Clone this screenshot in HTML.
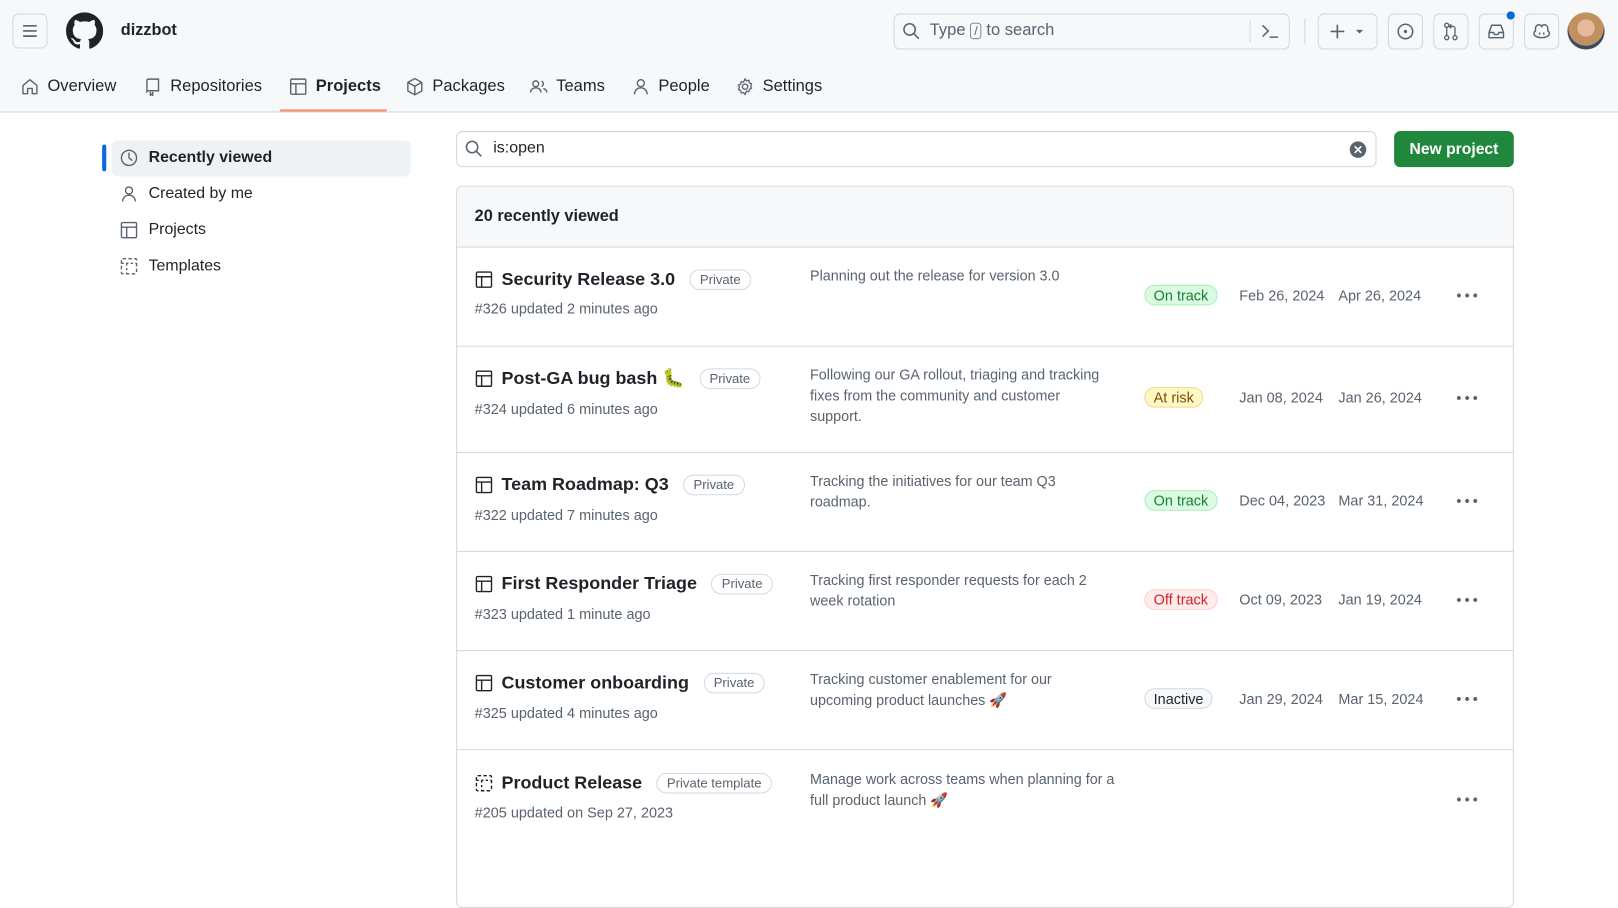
<!DOCTYPE html>
<html><head><meta charset="utf-8"><style>
*{box-sizing:border-box;margin:0;padding:0}
body{width:1618px;height:831px;overflow:hidden;background:#fff;font-family:"Liberation Sans","Noto Sans CJK JP",sans-serif;color:#1f2328;position:relative}
#w{position:absolute;left:0;top:0;width:1568px;height:806px;transform:scale(1.0319);transform-origin:0 0}
.a{position:absolute}
svg{display:block}
.hdr{left:0;top:0;width:1618px;height:109px;background:#f6f8fa;border-bottom:1px solid #d1d9e0}
.btn{border:1px solid #d1d9e0;border-radius:6px;background:#f6f8fa}
.nav{top:72px;height:24px;font-size:16px;color:#1f2328;display:flex;align-items:center;gap:8px}
.side{font-size:15.4px;display:flex;align-items:center;gap:10px}
.row{left:442px;width:1025px;border-top:1px solid #d1d9e0}
.t{font-size:17.4px;font-weight:600;display:flex;align-items:center;gap:8px;white-space:nowrap}
.lab{font-size:12.7px;font-weight:400;color:#59636e;border:1px solid #d1d9e0;border-radius:12px;padding:2px 9px;margin-left:6px}
.sub{font-size:14px;color:#59636e}
.d{font-size:13.9px;color:#59636e;line-height:20px;width:300px}
.st{font-size:14px;border-radius:12px;padding:1px 8px;border:1px solid}
.dt{font-size:14px;color:#59636e}
.dots{font-size:9px;color:#59636e;letter-spacing:2.5px}
</style></head><body><div id="w">
<div class="a hdr"></div>
<div class="a btn" style="left:12px;top:13px;width:34px;height:34px"><svg width="32" height="32" viewBox="0 0 32 32"><path d="M10 11h12M10 16h12M10 21h12" stroke="#59636e" stroke-width="1.6" stroke-linecap="round"/></svg></div>
<svg class="a" style="left:64px;top:12px" width="36" height="36" viewBox="0 0 16 16"><path fill="#1f2328" d="M8 0C3.58 0 0 3.58 0 8c0 3.54 2.290 6.53 5.47 7.59.4.07.55-.17.55-.38 0-.19-.01-.82-.01-1.490-2.01.37-2.53-.49-2.69-.94-.09-.23-.48-.94-.82-1.13-.28-.15-.68-.52-.01-.53.63-.01 1.08.58 1.23.82.72 1.21 1.87.87 2.33.66.07-.52.28-.87.51-1.07-1.78-.2-3.64-.89-3.64-3.95 0-.87.31-1.59.82-2.15-.08-.2-.36-1.02.08-2.12 0 0 .67-.21 2.2.82.64-.18 1.32-.27 2-.27.68 0 1.36.09 2 .27 1.530-1.04 2.2-.82 2.2-.82.44 1.1.16 1.92.08 2.12.51.56.82 1.27.82 2.150 0 3.07-1.87 3.75-3.65 3.95.29.25.54.73.54 1.48 0 1.07-.01 1.93-.01 2.2 0 .21.15.46.55.38A8.013 8.013 0 0016 8c0-4.42-3.58-8-8-8z"/></svg>
<div class="a" style="left:117px;top:21px;font-size:15.8px;font-weight:600">dizzbot</div>
<div class="a btn" style="left:866px;top:13px;width:384px;height:35px"></div>
<svg class="a" style="left:874px;top:21px" width="18" height="18" viewBox="0 0 18 18"><circle cx="7.5" cy="7.5" r="5.5" fill="none" stroke="#59636e" stroke-width="1.5"/><path d="M11.5 11.5l4.5 4.5" stroke="#59636e" stroke-width="1.5" stroke-linecap="round"/></svg>
<div class="a" style="left:901px;top:21px;font-size:16px;color:#59636e">Type <span style="border:1px solid #818b98;border-radius:3px;padding:0 3px;font-size:12px">/</span> to search</div>
<div class="a" style="left:1211px;top:20px;width:1px;height:21px;background:#d1d9e0"></div>
<svg class="a" style="left:1222px;top:22px" width="18" height="16" viewBox="0 0 18 16"><path d="M2 3l5 5-5 5M9 14h7" fill="none" stroke="#59636e" stroke-width="1.5" stroke-linecap="round" stroke-linejoin="round"/></svg>
<div class="a" style="left:1264px;top:18px;width:1px;height:25px;background:#d1d9e0"></div>
<div class="a btn" style="left:1277px;top:13px;width:58px;height:35px"><svg width="58" height="33" viewBox="0 0 58 33"><path d="M18 10.5v12M12 16.5h12" stroke="#59636e" stroke-width="1.6" stroke-linecap="round"/><path d="M36 15h7l-3.5 3.5z" fill="#59636e"/></svg></div>
<div class="a btn" style="left:1345px;top:13px;width:34px;height:35px"><svg width="32" height="33" viewBox="0 0 32 33"><circle cx="16" cy="16.5" r="7" fill="none" stroke="#59636e" stroke-width="1.5"/><circle cx="16" cy="16.5" r="1.6" fill="#59636e"/></svg></div>
<div class="a btn" style="left:1389px;top:13px;width:34px;height:35px"><svg width="32" height="33" viewBox="0 0 32 33"><circle cx="12" cy="10.5" r="2" fill="none" stroke="#59636e" stroke-width="1.3"/><circle cx="12" cy="22.5" r="2" fill="none" stroke="#59636e" stroke-width="1.3"/><circle cx="20" cy="22.5" r="2" fill="none" stroke="#59636e" stroke-width="1.3"/><path d="M12 12.5v8M20 20.5v-7a2 2 0 0 0-2-2h-3M16.5 9.5l-2 2 2 2" fill="none" stroke="#59636e" stroke-width="1.3"/></svg></div>
<div class="a btn" style="left:1433px;top:13px;width:34px;height:35px"><svg width="32" height="33" viewBox="0 0 32 33"><path d="M9 17.5l2.5-7h9l2.5 7v5H9zM9 17.5h4.5l1 2h3l1-2H23" fill="none" stroke="#59636e" stroke-width="1.4" stroke-linejoin="round"/></svg></div>
<div class="a" style="left:1459px;top:10px;width:10px;height:10px;border-radius:50%;background:#0969da;border:1.5px solid #f6f8fa"></div>
<div class="a btn" style="left:1477px;top:13px;width:34px;height:35px"><svg width="32" height="33" viewBox="0 0 32 33"><path d="M10 14c0-3 2-4 3.5-4s2.5 1 2.5 2.5c0-1.5 1-2.5 2.5-2.5S22 11 22 14v2c1 .5 1.5 1.5 1.5 2.5 0 2.5-3.5 4-7.5 4s-7.5-1.5-7.5-4c0-1 .5-2 1.5-2.5z" fill="none" stroke="#59636e" stroke-width="1.4"/><path d="M14 17.5v2M18 17.5v2" stroke="#59636e" stroke-width="1.4"/></svg></div>
<div class="a" style="left:1519px;top:12px;width:36px;height:36px;border-radius:50%;background:radial-gradient(circle at 50% 42%,#e8b89a 0 30%,#c09060 31% 62%,#3b4a5e 63%)"></div>

<div class="a nav" style="left:20px"><svg width="18" height="18" viewBox="0 0 16 16"><path d="M2 7l6-5 6 5v7H10V9.5H6V14H2z" fill="none" stroke="#59636e" stroke-width="1.2" stroke-linejoin="round"/></svg>Overview</div>
<div class="a nav" style="left:139px"><svg width="18" height="18" viewBox="0 0 16 16"><path d="M3 13V2.5A1 1 0 0 1 4 1.5h9v10H4a1 1 0 0 0-1 1.5M6 12.5v3l1-1 1 1v-3" fill="none" stroke="#59636e" stroke-width="1.2"/></svg>Repositories</div>
<div class="a nav" style="left:280px;font-weight:600"><svg width="18" height="18" viewBox="0 0 16 16"><rect x="1.5" y="1.5" width="13" height="13" rx="1" fill="none" stroke="#59636e" stroke-width="1.2"/><path d="M1.5 5.5h13M6 5.5v9" stroke="#59636e" stroke-width="1.2"/></svg>Projects</div>
<div class="a" style="left:271px;top:106px;width:104px;height:2px;background:#fd8c73;border-radius:2px"></div>
<div class="a nav" style="left:393px"><svg width="18" height="18" viewBox="0 0 16 16"><path d="M8 1l6 3.3v7.4L8 15l-6-3.3V4.3zM2 4.3L8 7.6l6-3.3M8 7.6V15" fill="none" stroke="#59636e" stroke-width="1.2" stroke-linejoin="round"/></svg>Packages</div>
<div class="a nav" style="left:513px"><svg width="18" height="18" viewBox="0 0 16 16"><circle cx="5.5" cy="5.5" r="2.5" fill="none" stroke="#59636e" stroke-width="1.2"/><path d="M1 13c0-2.5 2-4 4.5-4s4.5 1.5 4.5 4M10.5 3.2a2.5 2.5 0 0 1 0 4.6M12 9.5c1.8.6 3 1.8 3 3.5" fill="none" stroke="#59636e" stroke-width="1.2"/></svg>Teams</div>
<div class="a nav" style="left:612px"><svg width="18" height="18" viewBox="0 0 16 16"><circle cx="8" cy="5" r="3" fill="none" stroke="#59636e" stroke-width="1.2"/><path d="M2.5 14.5c0-3 2.5-5.5 5.5-5.5s5.5 2.5 5.5 5.5" fill="none" stroke="#59636e" stroke-width="1.2"/></svg>People</div>
<div class="a nav" style="left:713px"><svg width="18" height="18" viewBox="0 0 16 16"><circle cx="8" cy="8" r="2.3" fill="none" stroke="#59636e" stroke-width="1.2"/><path d="M8 1.2l1.2 1.8 2.1-.5.4 2.1 2 .9-.9 2 .9 1.9-2 .9-.4 2.1-2.1-.5L8 14.8l-1.2-1.8-2.1.5-.4-2.1-2-.9.9-2-.9-1.9 2-.9.4-2.1 2.1.5z" fill="none" stroke="#59636e" stroke-width="1.1" stroke-linejoin="round"/></svg>Settings</div>

<div class="a" style="left:99px;top:140px;width:4px;height:26px;border-radius:2px;background:#0969da"></div>
<div class="a" style="left:108px;top:136px;width:290px;height:35px;border-radius:6px;background:#eff2f5"></div>
<div class="a side" style="left:116px;top:144px;font-weight:600"><svg width="18" height="18" viewBox="0 0 16 16"><circle cx="8" cy="8" r="6.5" fill="none" stroke="#59636e" stroke-width="1.2"/><path d="M8 4v4l2.5 2" fill="none" stroke="#59636e" stroke-width="1.2" stroke-linecap="round"/></svg>Recently viewed</div>
<div class="a side" style="left:116px;top:179px"><svg width="18" height="18" viewBox="0 0 16 16"><circle cx="8" cy="5" r="3" fill="none" stroke="#59636e" stroke-width="1.2"/><path d="M2.5 14.5c0-3 2.5-5.5 5.5-5.5s5.5 2.5 5.5 5.5" fill="none" stroke="#59636e" stroke-width="1.2"/></svg>Created by me</div>
<div class="a side" style="left:116px;top:214px"><svg width="18" height="18" viewBox="0 0 16 16"><rect x="1.5" y="1.5" width="13" height="13" rx="1" fill="none" stroke="#59636e" stroke-width="1.2"/><path d="M1.5 5.5h13M6 5.5v9" stroke="#59636e" stroke-width="1.2"/></svg>Projects</div>
<div class="a side" style="left:116px;top:249px"><svg width="18" height="18" viewBox="0 0 16 16"><rect x="1.5" y="1.5" width="13" height="13" rx="1" fill="none" stroke="#59636e" stroke-width="1.2" stroke-dasharray="3 2"/><path d="M1.5 5.5h13M6 5.5v9" stroke="#59636e" stroke-width="1.2" stroke-dasharray="2 2"/></svg>Templates</div>

<div class="a" style="left:442px;top:127px;width:892px;height:35px;border:1px solid #d1d9e0;border-radius:6px"></div>
<svg class="a" style="left:450px;top:135px" width="18" height="18" viewBox="0 0 18 18"><circle cx="7.5" cy="7.5" r="5.5" fill="none" stroke="#59636e" stroke-width="1.5"/><path d="M11.5 11.5l4.5 4.5" stroke="#59636e" stroke-width="1.5" stroke-linecap="round"/></svg>
<div class="a" style="left:478px;top:135px;font-size:15.5px">is:open</div>
<svg class="a" style="left:1307px;top:136px" width="18" height="18" viewBox="0 0 18 18"><circle cx="9" cy="9" r="8" fill="#59636e"/><path d="M6.3 6.3l5.4 5.4M11.7 6.3l-5.4 5.4" stroke="#fff" stroke-width="1.6" stroke-linecap="round"/></svg>
<div class="a" style="left:1351px;top:127px;width:116px;height:35px;background:#1f883d;border-radius:6px;color:#fff;font-size:15.2px;font-weight:600;text-align:center;line-height:35px">New project</div>

<div class="a" style="left:442px;top:180px;width:1025px;height:700px;border:1px solid #d1d9e0;border-radius:6px"></div>
<div class="a" style="left:443px;top:181px;width:1023px;height:58px;background:#f6f8fa;border-radius:6px 6px 0 0"></div>
<div class="a" style="left:460px;top:201px;font-size:15.8px;font-weight:600">20 recently viewed</div>

<div class="a row" style="top:239px;height:96px"></div>
<div class="a t" style="left:460px;top:260px"><svg width="18" height="18" viewBox="0 0 16 16"><rect x="1.5" y="1.5" width="13" height="13" rx="1" fill="none" stroke="#1f2328" stroke-width="1.2"/><path d="M1.5 5.5h13M6 5.5v9" stroke="#1f2328" stroke-width="1.2"/></svg>Security Release 3.0<span class="lab">Private</span></div>
<div class="a sub" style="left:460px;top:291px">#326 updated 2 minutes ago</div>
<div class="a d" style="left:785px;top:257px">Planning out the release for version 3.0</div>
<div class="a st" style="left:1109px;top:276px;background:#dafbe1;border-color:#aceebb;color:#1a7f37">On track</div>
<div class="a dt" style="left:1201px;top:278px">Feb 26, 2024</div>
<div class="a dt" style="left:1297px;top:278px">Apr 26, 2024</div>
<div class="a dots" style="left:1411px;top:281px">●●●</div>

<div class="a row" style="top:335px;height:103px"></div>
<div class="a t" style="left:460px;top:356px"><svg width="18" height="18" viewBox="0 0 16 16"><rect x="1.5" y="1.5" width="13" height="13" rx="1" fill="none" stroke="#1f2328" stroke-width="1.2"/><path d="M1.5 5.5h13M6 5.5v9" stroke="#1f2328" stroke-width="1.2"/></svg>Post-GA bug bash 🐛<span class="lab">Private</span></div>
<div class="a sub" style="left:460px;top:388px">#324 updated 6 minutes ago</div>
<div class="a d" style="left:785px;top:353px;width:282px">Following our GA rollout, triaging and tracking fixes from the community and customer support.</div>
<div class="a st" style="left:1109px;top:375px;background:#fff8c5;border-color:#f0d98a;color:#7d4e00">At risk</div>
<div class="a dt" style="left:1201px;top:377px">Jan 08, 2024</div>
<div class="a dt" style="left:1297px;top:377px">Jan 26, 2024</div>
<div class="a dots" style="left:1411px;top:380px">●●●</div>

<div class="a row" style="top:438px;height:96px"></div>
<div class="a t" style="left:460px;top:459px"><svg width="18" height="18" viewBox="0 0 16 16"><rect x="1.5" y="1.5" width="13" height="13" rx="1" fill="none" stroke="#1f2328" stroke-width="1.2"/><path d="M1.5 5.5h13M6 5.5v9" stroke="#1f2328" stroke-width="1.2"/></svg>Team Roadmap: Q3<span class="lab">Private</span></div>
<div class="a sub" style="left:460px;top:491px">#322 updated 7 minutes ago</div>
<div class="a d" style="left:785px;top:456px;width:290px">Tracking the initiatives for our team Q3 roadmap.</div>
<div class="a st" style="left:1109px;top:475px;background:#dafbe1;border-color:#aceebb;color:#1a7f37">On track</div>
<div class="a dt" style="left:1201px;top:477px">Dec 04, 2023</div>
<div class="a dt" style="left:1297px;top:477px">Mar 31, 2024</div>
<div class="a dots" style="left:1411px;top:480px">●●●</div>

<div class="a row" style="top:534px;height:96px"></div>
<div class="a t" style="left:460px;top:555px"><svg width="18" height="18" viewBox="0 0 16 16"><rect x="1.5" y="1.5" width="13" height="13" rx="1" fill="none" stroke="#1f2328" stroke-width="1.2"/><path d="M1.5 5.5h13M6 5.5v9" stroke="#1f2328" stroke-width="1.2"/></svg>First Responder Triage<span class="lab">Private</span></div>
<div class="a sub" style="left:460px;top:587px">#323 updated 1 minute ago</div>
<div class="a d" style="left:785px;top:552px;width:290px">Tracking first responder requests for each 2 week rotation</div>
<div class="a st" style="left:1109px;top:571px;background:#ffebe9;border-color:#ffcecb;color:#cf222e">Off track</div>
<div class="a dt" style="left:1201px;top:573px">Oct 09, 2023</div>
<div class="a dt" style="left:1297px;top:573px">Jan 19, 2024</div>
<div class="a dots" style="left:1411px;top:576px">●●●</div>

<div class="a row" style="top:630px;height:96px"></div>
<div class="a t" style="left:460px;top:651px"><svg width="18" height="18" viewBox="0 0 16 16"><rect x="1.5" y="1.5" width="13" height="13" rx="1" fill="none" stroke="#1f2328" stroke-width="1.2"/><path d="M1.5 5.5h13M6 5.5v9" stroke="#1f2328" stroke-width="1.2"/></svg>Customer onboarding<span class="lab">Private</span></div>
<div class="a sub" style="left:460px;top:683px">#325 updated 4 minutes ago</div>
<div class="a d" style="left:785px;top:648px;width:290px">Tracking customer enablement for our upcoming product launches 🚀</div>
<div class="a st" style="left:1109px;top:667px;background:#f6f8fa;border-color:#d1d9e0;color:#1f2328">Inactive</div>
<div class="a dt" style="left:1201px;top:669px">Jan 29, 2024</div>
<div class="a dt" style="left:1297px;top:669px">Mar 15, 2024</div>
<div class="a dots" style="left:1411px;top:672px">●●●</div>

<div class="a row" style="top:726px;height:110px"></div>
<div class="a t" style="left:460px;top:748px"><svg width="18" height="18" viewBox="0 0 16 16"><rect x="1.5" y="1.5" width="13" height="13" rx="1" fill="none" stroke="#1f2328" stroke-width="1.2" stroke-dasharray="3 2"/><path d="M1.5 5.5h13M6 5.5v9" stroke="#1f2328" stroke-width="1.2" stroke-dasharray="2 2"/></svg>Product Release<span class="lab">Private template</span></div>
<div class="a sub" style="left:460px;top:779px">#205 updated on Sep 27, 2023</div>
<div class="a d" style="left:785px;top:745px">Manage work across teams when planning for a full product launch 🚀</div>
<div class="a dots" style="left:1411px;top:769px">●●●</div>
</div></body></html>
